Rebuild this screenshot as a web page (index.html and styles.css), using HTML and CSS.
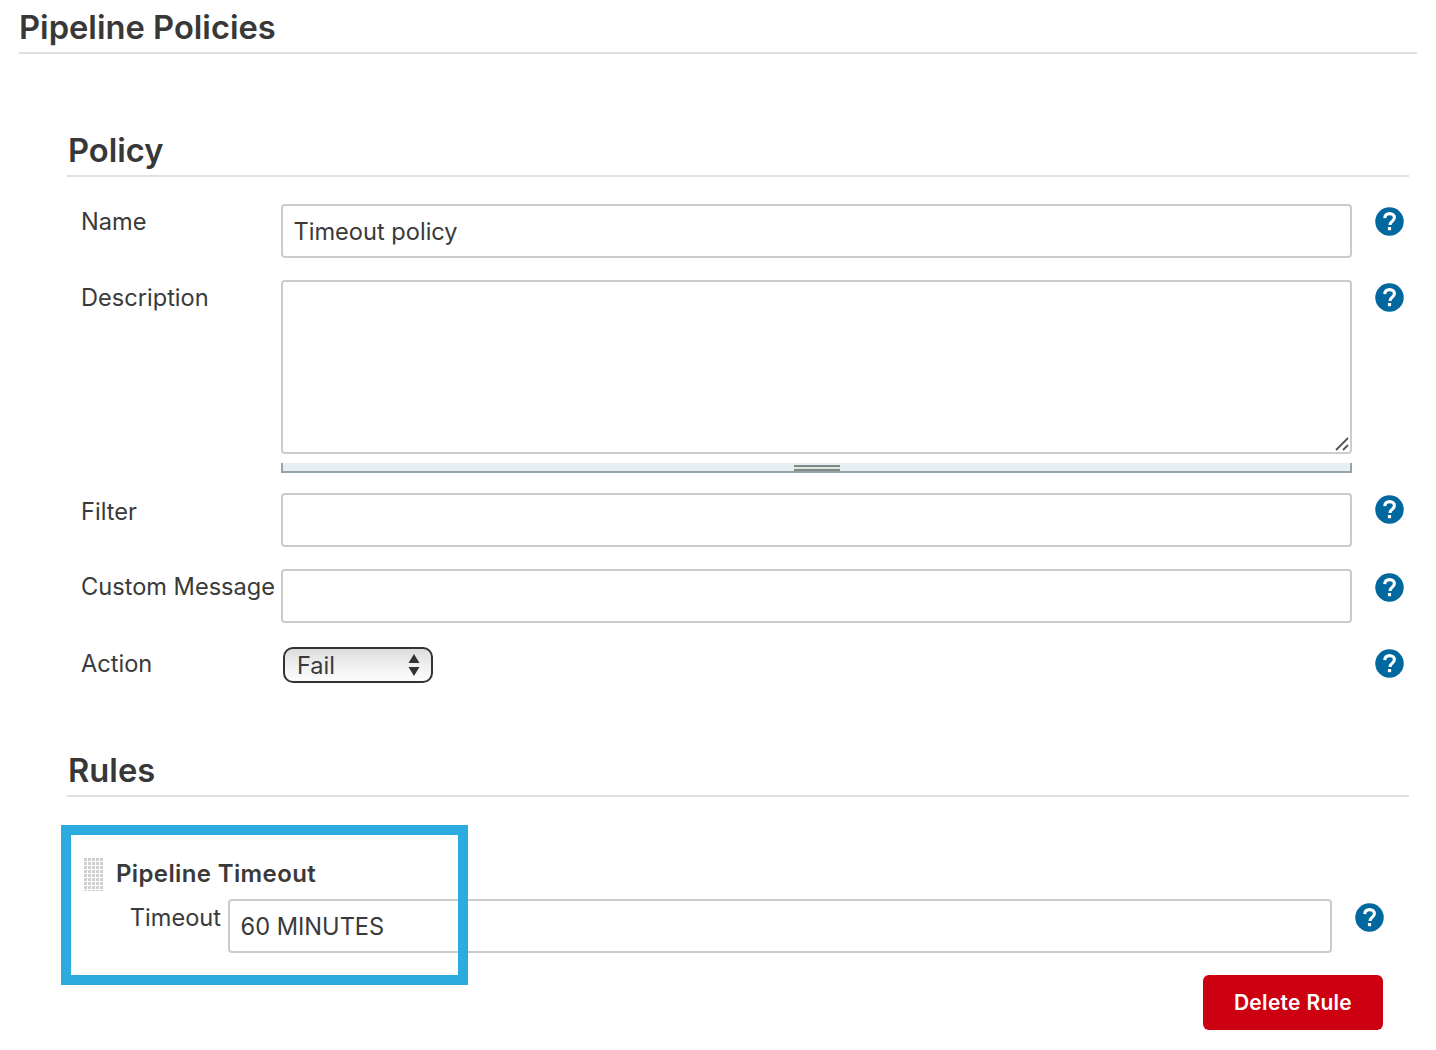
FILE: index.html
```html
<!DOCTYPE html>
<html lang="en">
<head>
<meta charset="utf-8">
<title>Pipeline Policies</title>
<link rel="stylesheet" href="styles.css">
</head>
<body>
<svg class="defs" width="0" height="0" aria-hidden="true">
  <symbol id="help" viewBox="0 0 29 29">
    <circle cx="14.5" cy="14.5" r="14.25" fill="#00689f"/>
    <path d="M9.700 11.200c.2-3 2.100-4.600 4.900-4.600 2.900 0 4.800 1.700 4.800 4 0 1.900-1 2.800-2.400 3.800-1.300.9-1.900 1.600-1.900 3.100v.6" fill="none" stroke="#fff" stroke-width="3.100"/>
    <rect x="12.900" y="20" width="3.200" height="3.200" fill="#fff"/>
  </symbol>
  <pattern id="dots" width="4" height="4" patternUnits="userSpaceOnUse">
    <rect width="3" height="3" fill="#cfcfcf"/>
  </pattern>
</svg>
<main class="page">
  <h1 class="page-title">Pipeline Policies</h1>
  <div class="content">
    <section class="section section-policy">
      <h2 class="section-title">Policy</h2>
      <div class="row row-first">
        <label class="label">Name</label>
        <div class="control"><div class="input">Timeout policy</div></div>
        <svg class="help"><use href="#help"/></svg>
      </div>
      <div class="row row-area">
        <label class="label">Description</label>
        <div class="control">
          <div class="textarea">
            <svg class="grip" width="16" height="16" viewBox="0 0 16 16"><path d="M2 14 14 2M9 14l5-5" stroke="#555" stroke-width="1.800" fill="none"/></svg>
          </div>
          <div class="splitter"><span class="splitter-handle"></span></div>
        </div>
        <svg class="help"><use href="#help"/></svg>
      </div>
      <div class="row row-filter">
        <label class="label label-low">Filter</label>
        <div class="control"><div class="input"></div></div>
        <svg class="help help-up"><use href="#help"/></svg>
      </div>
      <div class="row row-message">
        <label class="label">Custom Message</label>
        <div class="control"><div class="input"></div></div>
        <svg class="help help-down"><use href="#help"/></svg>
      </div>
      <div class="row row-action">
        <label class="label label-high">Action</label>
        <div class="control">
          <div class="select">
            <span>Fail</span>
            <svg class="arrows" width="12" height="24" viewBox="0 0 12 24"><path d="M6 1l5.500 9H.5zM6 23 .5 14h11z" fill="#333"/></svg>
          </div>
        </div>
        <svg class="help"><use href="#help"/></svg>
      </div>
    </section>
    <section class="section section-rules">
      <h2 class="section-title">Rules</h2>
      <div class="rule">
        <div class="rule-head">
          <svg class="drag" width="20" height="33" aria-hidden="true"><rect width="20" height="33" fill="url(#dots)"/></svg>
          <span class="rule-name">Pipeline Timeout</span>
        </div>
        <div class="rule-row">
          <label class="rule-label">Timeout</label>
          <div class="input rule-input">60 MINUTES</div>
          <svg class="help rule-help"><use href="#help"/></svg>
        </div>
        <div class="rule-actions"><button class="delete" type="button">Delete Rule</button></div>
      </div>
      <div class="highlight"></div>
    </section>
  </div>
</main>
</body>
</html>
```
FILE: styles.css
```css
html, body {
  margin: 0;
  padding: 0;
  background: #fff;
}
body {
  font-family: Inter, "Liberation Sans", sans-serif;
  color: #3a3a3a;
  font-size: 23.600px;
}
.defs {
  position: absolute;
}
.page {
  padding: 0 19px;
  width: 1398px;
}
.page-title {
  margin: 0;
  height: 52px;
  border-bottom: 2px solid #e0e0e0;
  font-size: 32.700px;
  font-weight: 600;
  line-height: 55px;
  color: #383838;
}
.content {
  padding-left: 48px;
  width: 1342px;
}
.section {
  position: relative;
}
.section-policy {
  padding-top: 70px;
}
.section-title {
  margin: 0;
  height: 51px;
  border-bottom: 2px solid #e0e0e0;
  font-size: 32.700px;
  font-weight: 600;
  line-height: 52px;
  padding-left: 1px;
  color: #383838;
}
.row {
  display: flex;
  align-items: flex-start;
}
.row-first {
  margin-top: 27px;
}
.row-area {
  margin-top: 22px;
}
.row-filter {
  margin-top: 20px;
}
.row-message {
  margin-top: 22px;
}
.row-action {
  margin-top: 24px;
}
.label {
  box-sizing: border-box;
  width: 214px;
  padding: 3px 0 0 14px;
  line-height: 30px;
  white-space: nowrap;
}
.label-low {
  padding-top: 4px;
}
.label-high {
  padding-top: 2px;
}
.control {
  width: 1071px;
}
.input {
  box-sizing: border-box;
  height: 54px;
  padding: 0 10.500px;
  border: 2px solid #ccc;
  border-radius: 4px;
  line-height: 52px;
}
.textarea {
  position: relative;
  box-sizing: border-box;
  height: 174px;
  border: 2px solid #ccc;
  border-radius: 4px;
}
.grip {
  position: absolute;
  right: 0;
  bottom: 0;
}
.splitter {
  display: flex;
  justify-content: center;
  box-sizing: border-box;
  height: 10px;
  margin-top: 9px;
  background: #e8eff2;
  border: solid #93a4ad;
  border-width: 0 2px 2px;
}
.splitter-handle {
  box-sizing: border-box;
  width: 46px;
  height: 6px;
  margin: 2px 0 0 1px;
  background: #dfe5e5;
  border-top: 2px solid #7f8c85;
  border-bottom: 2px solid #7f8c85;
}
.help {
  width: 29px;
  height: 29px;
  margin: 3px 0 0 22.500px;
  flex: none;
}
.help-up {
  margin-top: 2px;
}
.help-down {
  margin-top: 4px;
}
.select {
  display: flex;
  align-items: center;
  justify-content: space-between;
  box-sizing: border-box;
  width: 150px;
  height: 36px;
  margin-left: 2px;
  padding: 0 11px 0 12px;
  border: 2px solid #333;
  border-radius: 10px;
  background: linear-gradient(#dcdcdc, #f1f1f1 55%, #fcfcfc);
}
.row-action .help {
  margin-top: 2px;
}
.section-rules {
  margin-top: 61px;
}
.rule {
  padding-top: 59px;
}
.rule-head {
  display: flex;
  align-items: center;
  margin-left: 17px;
  height: 36px;
}
.drag {
  margin-right: 12px;
}
.rule-name {
  font-weight: 600;
  font-size: 24px;
  letter-spacing: .37px;
  line-height: 36px;
}
.rule-row {
  display: flex;
  align-items: flex-start;
  margin-top: 7px;
}
.rule-label {
  box-sizing: border-box;
  width: 161px;
  padding: 1px 7px 0 0;
  text-align: right;
  line-height: 36px;
}
.rule-input {
  width: 1104px;
}
.rule-help {
  margin: 4px 0 0 22.500px;
}
.rule-actions {
  display: flex;
  justify-content: flex-end;
  margin-top: 22px;
  padding-right: 26px;
}
.delete {
  width: 180px;
  height: 55px;
  border: 0;
  border-radius: 6px;
  background: #cc0010;
  color: #fff;
  font: 600 21px Inter, "Liberation Sans", sans-serif;
  letter-spacing: .3px;
}
.highlight {
  position: absolute;
  left: -6px;
  top: 81px;
  box-sizing: border-box;
  width: 407px;
  height: 160px;
  border: 10px solid #2cabe0;
  pointer-events: none;
}
```
